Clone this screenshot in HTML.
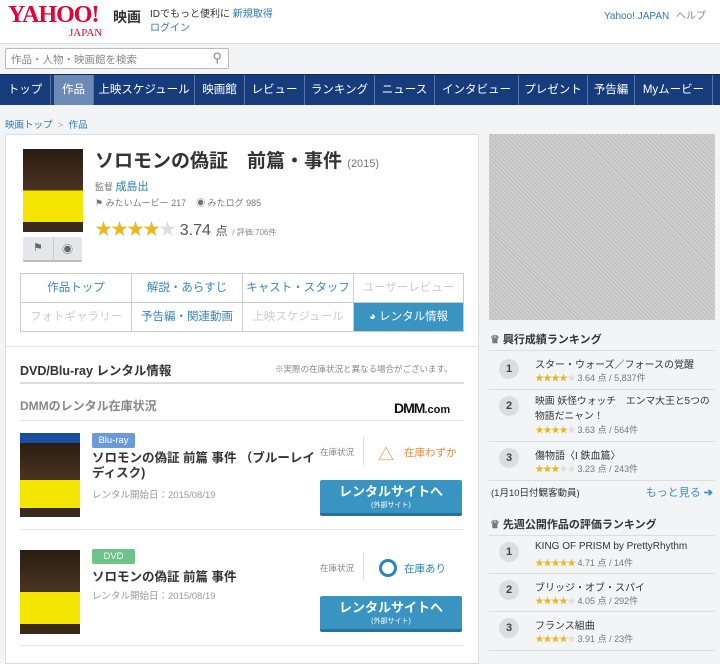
<!DOCTYPE html><html><head><meta charset="utf-8"><style>
*{margin:0;padding:0;box-sizing:border-box}
body{width:720px;height:654px;overflow:hidden;background:#f3f4f6;font-family:"Liberation Sans","Noto Sans CJK JP",sans-serif;color:#333;position:relative;font-size:11px}
.a{position:absolute}
a{color:#2a7ab0;text-decoration:none}
.nav{left:0;top:74px;width:720px;height:31px;background:#163c7c;border-top:1px solid #0d2b5e}
.nav span{position:absolute;top:0;height:30px;line-height:30px;color:#fff;font-size:11.5px;text-align:center;border-right:1px solid #5a76a6;white-space:nowrap}
.stars{color:#e8b923;letter-spacing:-1px}
.stars i{color:#ddd;font-style:normal}
.tab{position:absolute;height:29px;line-height:29px;text-align:center;font-size:11.5px;color:#3a86b8;border-right:1px solid #ccc;border-bottom:1px solid #ccc;background:#fff}
.rk{position:absolute;left:489px;width:226px;border-top:1px solid #ddd}
.num{position:absolute;left:10px;width:20px;height:20px;border-radius:50%;background:#dcdde2;font-size:11px;text-align:center;line-height:20px;font-weight:bold;color:#444}
.btn{position:absolute;left:320px;width:142px;height:36px;background:#3a94c2;border-bottom:3px solid #2a7098;border-radius:2px;color:#fff;text-align:center;font-weight:bold;font-size:13px;line-height:18px;padding-top:3px}
.btn small{display:block;font-size:7px;line-height:9px;font-weight:normal}
.poster{position:absolute;width:60px;background:linear-gradient(#2a1d12 0,#4a3420 50%,#f5e600 50%,#f5e600 88%,#3a2a1a 88%)}
</style></head><body>
<div class="a" style="left:0;top:0;width:720px;height:44px;background:#fff;border-bottom:1px solid #ddd"></div>
<div class="a" style="left:8px;top:2px;font-family:'Liberation Serif',serif;font-size:24px;font-weight:bold;color:#e60033;letter-spacing:-1px">YAHOO!</div>
<div class="a" style="left:69px;top:27px;font-family:'Liberation Serif',serif;font-size:11px;color:#e60033">JAPAN</div>
<div class="a" style="left:113px;top:7px;font-size:14px;font-weight:bold;color:#333">映画</div>
<div class="a" style="left:150px;top:5px;font-size:10px">IDでもっと便利に <a>新規取得</a></div>
<div class="a" style="left:150px;top:19px;font-size:10px"><a>ログイン</a></div>
<div class="a" style="left:604px;top:7px;font-size:10px"><a>Yahoo! JAPAN</a> <span style="color:#888;margin-left:4px">ヘルプ</span></div>
<div class="a" style="left:5px;top:48px;width:224px;height:21px;background:#fff;border:1px solid #bbb;border-radius:2px;font-size:10.5px;color:#888;padding:3px 5px">作品・人物・映画館を検索<span style="position:absolute;right:6px;top:1px;font-size:13px">&#9906;</span></div>
<div class="a nav">
<span style="left:0;width:51px">トップ</span><span style="left:54px;width:40px;background:#6d8ab5">作品</span><span style="left:94px;width:101px">上映スケジュール</span><span style="left:195px;width:50px">映画館</span><span style="left:245px;width:60px">レビュー</span><span style="left:305px;width:70px">ランキング</span><span style="left:375px;width:60px">ニュース</span><span style="left:435px;width:84px">インタビュー</span><span style="left:519px;width:69px">プレゼント</span><span style="left:588px;width:47px">予告編</span><span style="left:635px;width:78px">Myムービー</span>
</div>
<div class="a" style="left:5px;top:117px;font-size:9.5px"><a>映画トップ</a> <span style="color:#aaa">&nbsp;&gt;&nbsp;</span> <a>作品</a></div>
<div class="a" style="left:5px;top:134px;width:474px;height:530px;background:#fff;border:1px solid #ddd"></div>
<div class="poster" style="left:23px;top:149px;height:83px"></div>
<div class="a" style="left:23px;top:237px;width:59px;height:25px;background:#e4e6ea;border-bottom:2px solid #bbb;border-radius:2px;font-size:11px;color:#666"><span class="a" style="left:10px;top:4px">&#9873;</span><span class="a" style="left:30px;top:0;height:25px;border-left:1px solid #ccc"></span><span class="a" style="left:39px;top:4px">&#9673;</span></div>
<div class="a" style="left:95px;top:146px;font-size:19px;font-weight:bold;color:#333">ソロモンの偽証　前篇・事件 <span style="font-size:11px;font-weight:normal;color:#777">(2015)</span></div>
<div class="a" style="left:95px;top:178px;font-size:9px;color:#777">監督 <a style="font-size:11px">成島出</a></div>
<div class="a" style="left:95px;top:196px;font-size:9px;color:#777">&#9873; みたいムービー 217 &nbsp;&nbsp; &#9673; みたログ 985</div>
<div class="a" style="left:95px;top:215px;font-size:17px"><span class="stars">★★★★<i>★</i></span> <span style="color:#555;font-size:16px">3.74</span> <span style="font-size:12px;color:#555">点</span> <span style="font-size:8px;color:#888">/ 評価:706件</span></div>
<div class="a" style="left:20px;top:273px;width:444px;height:59px;border-left:1px solid #ccc;border-top:1px solid #ccc">
<div class="tab" style="left:0;top:0;width:111px">作品トップ</div><div class="tab" style="left:111px;top:0;width:111px">解説・あらすじ</div><div class="tab" style="left:222px;top:0;width:111px">キャスト・スタッフ</div><div class="tab" style="left:333px;top:0;width:110px;color:#ccc">ユーザーレビュー</div>
<div class="tab" style="left:0;top:29px;width:111px;color:#ccc">フォトギャラリー</div><div class="tab" style="left:111px;top:29px;width:111px">予告編・関連動画</div><div class="tab" style="left:222px;top:29px;width:111px;color:#ccc">上映スケジュール</div><div class="tab" style="left:333px;top:29px;width:110px;background:#3a94c2;color:#fff">&#9685; レンタル情報</div>
</div>
<div class="a" style="left:6px;top:346px;width:472px;border-top:1px solid #e5e5e5"></div>
<div class="a" style="left:20px;top:360px;font-size:12.5px;font-weight:bold">DVD/Blu-ray レンタル情報</div>
<div class="a" style="left:275px;top:363px;font-size:8.5px;color:#888">※実際の在庫状況と異なる場合がございます。</div>
<div class="a" style="left:20px;top:382px;width:444px;border-top:2px solid #ddd"></div>
<div class="a" style="left:20px;top:397px;font-size:12px;font-weight:bold;color:#888">DMMのレンタル在庫状況</div>
<div class="a" style="left:394px;top:400px;font-size:14px;font-weight:900;color:#111;letter-spacing:-1px">DMM<span style="font-size:11px;letter-spacing:0">.com</span></div>
<div class="a" style="left:20px;top:420px;width:444px;border-top:1px solid #e5e5e5"></div>
<div class="poster" style="left:20px;top:433px;height:84px;border-top:10px solid #1a4fa0"></div>
<div class="a" style="left:92px;top:433px;width:43px;height:15px;background:#6a9ad8;border-radius:2px;color:#fff;font-size:9.5px;text-align:center;line-height:15px">Blu-ray</div>
<div class="a" style="left:92px;top:451px;width:228px;font-size:12.5px;font-weight:bold;line-height:15px">ソロモンの偽証 前篇 事件 （ブルーレイ<br>ディスク)</div>
<div class="a" style="left:92px;top:487px;font-size:9.5px;color:#999">レンタル開始日：2015/08/19</div>
<div class="a" style="left:320px;top:446px;font-size:8.5px;color:#888">在庫状況</div>
<div class="a" style="left:363px;top:437px;height:28px;border-left:1px solid #ddd"></div>
<div class="a" style="left:378px;top:441px;font-size:16px;color:#e98b3a">△</div>
<div class="a" style="left:404px;top:445px;font-size:10.5px;color:#e98b3a">在庫わずか</div>
<div class="btn" style="top:480px">レンタルサイトへ<small>(外部サイト)</small></div>
<div class="a" style="left:20px;top:529px;width:444px;border-top:1px solid #e5e5e5"></div>
<div class="poster" style="left:20px;top:550px;height:84px"></div>
<div class="a" style="left:92px;top:549px;width:43px;height:15px;background:#6cc488;border-radius:2px;color:#fff;font-size:9.5px;text-align:center;line-height:15px">DVD</div>
<div class="a" style="left:92px;top:566px;font-size:12.5px;font-weight:bold">ソロモンの偽証 前篇 事件</div>
<div class="a" style="left:92px;top:588px;font-size:9.5px;color:#999">レンタル開始日：2015/08/19</div>
<div class="a" style="left:320px;top:562px;font-size:8.5px;color:#888">在庫状況</div>
<div class="a" style="left:363px;top:553px;height:28px;border-left:1px solid #ddd"></div>
<div class="a" style="left:379px;top:559px;width:18px;height:18px;border:3px solid #2a86b8;border-radius:50%"></div>
<div class="a" style="left:404px;top:561px;font-size:10.5px;color:#2a86b8">在庫あり</div>
<div class="btn" style="top:596px">レンタルサイトへ<small>(外部サイト)</small></div>
<div class="a" style="left:20px;top:645px;width:444px;border-top:1px solid #e5e5e5"></div>
<div class="a" style="left:489px;top:134px;width:226px;height:186px;background:repeating-linear-gradient(45deg,#bdbdbd 0,#bdbdbd 1px,#cfcfcf 1px,#cfcfcf 3px)"></div>
<div class="a" style="left:490px;top:331px;font-size:11px;font-weight:bold"><span style="color:#777">♛</span> 興行成績ランキング</div>
<div class="rk" style="top:350px;height:39px"><div class="num" style="top:8px">1</div><div class="a" style="left:46px;top:5px;font-size:10px">スター・ウォーズ／フォースの覚醒</div><div class="a" style="left:46px;top:20px;font-size:9px"><span class="stars">★★★★<i>★</i></span> <span style="color:#777">3.64 点 / 5,837件</span></div></div>
<div class="rk" style="top:389px;height:52px"><div class="num" style="top:6px">2</div><div class="a" style="left:46px;top:4px;width:175px;font-size:9.8px;line-height:15px">映画 妖怪ウォッチ　エンマ大王と5つの物語だニャン！</div><div class="a" style="left:46px;top:33px;font-size:9px"><span class="stars">★★★★<i>★</i></span> <span style="color:#777">3.63 点 / 564件</span></div></div>
<div class="rk" style="top:441px;height:39px"><div class="num" style="top:6px">3</div><div class="a" style="left:46px;top:5px;font-size:10px">傷物語〈I 鉄血篇〉</div><div class="a" style="left:46px;top:20px;font-size:9px"><span class="stars">★★★<i>★★</i></span> <span style="color:#777">3.23 点 / 243件</span></div></div>
<div class="rk" style="top:480px;border-top:1px solid #ddd;height:20px"><div class="a" style="left:2px;top:4px;font-size:9.5px">(1月10日付観客動員)</div><div class="a" style="right:2px;top:3px;font-size:11px;color:#3a94c2">もっと見る <b>➔</b></div></div>
<div class="a" style="left:490px;top:516px;font-size:11px;font-weight:bold"><span style="color:#777">♛</span> 先週公開作品の評価ランキング</div>
<div class="rk" style="top:535px;height:38px"><div class="num" style="top:6px">1</div><div class="a" style="left:46px;top:5px;font-size:10px">KING OF PRISM by PrettyRhythm</div><div class="a" style="left:46px;top:20px;font-size:9px"><span class="stars">★★★★★</span> <span style="color:#777">4.71 点 / 14件</span></div></div>
<div class="rk" style="top:573px;height:38px"><div class="num" style="top:6px">2</div><div class="a" style="left:46px;top:5px;font-size:10px">ブリッジ・オブ・スパイ</div><div class="a" style="left:46px;top:20px;font-size:9px"><span class="stars">★★★★<i>★</i></span> <span style="color:#777">4.05 点 / 292件</span></div></div>
<div class="rk" style="top:611px;height:40px;border-bottom:1px solid #ddd"><div class="num" style="top:6px">3</div><div class="a" style="left:46px;top:5px;font-size:10px">フランス組曲</div><div class="a" style="left:46px;top:20px;font-size:9px"><span class="stars">★★★★<i>★</i></span> <span style="color:#777">3.91 点 / 23件</span></div></div>
</body></html>
